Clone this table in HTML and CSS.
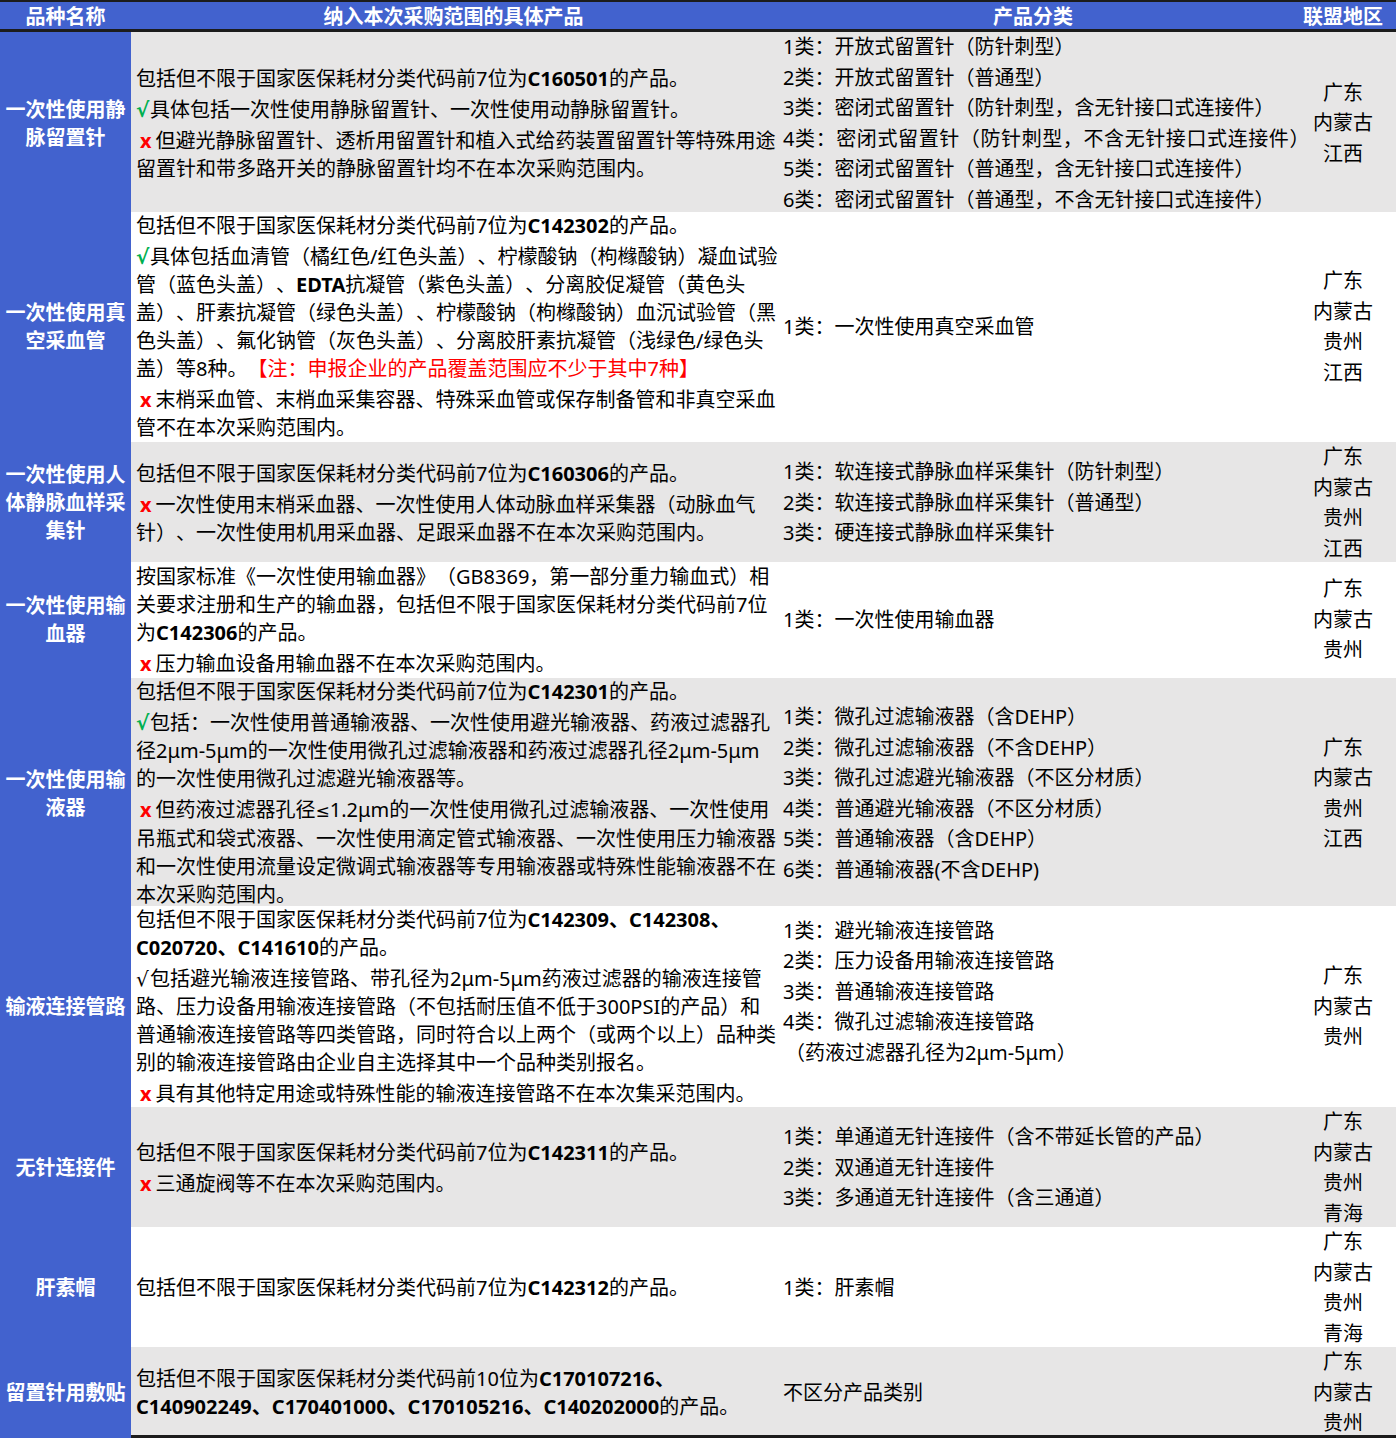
FILE: index.html
```html
<!DOCTYPE html>
<html lang="zh-CN">
<head>
<meta charset="utf-8">
<title>采购范围</title>
<link rel="stylesheet" href="styles.css">
</head>
<body>
<div class="table">
  <div class="head">
    <div class="h c1h">品种名称</div>
    <div class="h">纳入本次采购范围的具体产品</div>
    <div class="h">产品分类</div>
    <div class="h">联盟地区</div>
  </div>

  <div class="row gray r1">
    <div class="c1">一次性使用静脉留置针</div>
    <div class="c2">
      <div class="p">包括但不限于国家医保耗材分类代码前7位为<b>C160501</b>的产品。</div>
      <div class="p sp"><span class="yes">√</span>具体包括一次性使用静脉留置针、一次性使用动静脉留置针。</div>
      <div class="p sp"><span class="no">x</span>但避光静脉留置针、透析用留置针和植入式给药装置留置针等特殊用途<br>留置针和带多路开关的静脉留置针均不在本次采购范围内。</div>
    </div>
    <div class="c3">
      <div>1类：开放式留置针（防针刺型）</div>
      <div>2类：开放式留置针（普通型）</div>
      <div>3类：密闭式留置针（防针刺型，含无针接口式连接件）</div>
      <div class="wide">4类：密闭式留置针（防针刺型，不含无针接口式连接件）</div>
      <div>5类：密闭式留置针（普通型，含无针接口式连接件）</div>
      <div>6类：密闭式留置针（普通型，不含无针接口式连接件）</div>
    </div>
    <div class="c4"><div>广东</div><div>内蒙古</div><div>江西</div></div>
  </div>

  <div class="row r2">
    <div class="c1">一次性使用真空采血管</div>
    <div class="c2">
      <div class="p">包括但不限于国家医保耗材分类代码前7位为<b>C142302</b>的产品。</div>
      <div class="p sp"><span class="yes">√</span>具体包括血清管（橘红色/红色头盖）、柠檬酸钠（枸橼酸钠）凝血试验<br>管（蓝色头盖）、<b>EDTA</b>抗凝管（紫色头盖）、分离胶促凝管（黄色头<br>盖）、肝素抗凝管（绿色头盖）、柠檬酸钠（枸橼酸钠）血沉试验管（黑<br>色头盖）、氟化钠管（灰色头盖）、分离胶肝素抗凝管（浅绿色/绿色头<br>盖）等8种。<span class="note">【注：申报企业的产品覆盖范围应不少于其中7种】</span></div>
      <div class="p sp"><span class="no">x</span>末梢采血管、末梢血采集容器、特殊采血管或保存制备管和非真空采血<br>管不在本次采购范围内。</div>
    </div>
    <div class="c3"><div>1类：一次性使用真空采血管</div></div>
    <div class="c4"><div>广东</div><div>内蒙古</div><div>贵州</div><div>江西</div></div>
  </div>

  <div class="row gray r3">
    <div class="c1">一次性使用人体静脉血样采集针</div>
    <div class="c2">
      <div class="p">包括但不限于国家医保耗材分类代码前7位为<b>C160306</b>的产品。</div>
      <div class="p sp"><span class="no">x</span>一次性使用末梢采血器、一次性使用人体动脉血样采集器（动脉血气<br>针）、一次性使用机用采血器、足跟采血器不在本次采购范围内。</div>
    </div>
    <div class="c3">
      <div>1类：软连接式静脉血样采集针（防针刺型）</div>
      <div>2类：软连接式静脉血样采集针（普通型）</div>
      <div>3类：硬连接式静脉血样采集针</div>
    </div>
    <div class="c4"><div>广东</div><div>内蒙古</div><div>贵州</div><div>江西</div></div>
  </div>

  <div class="row r4">
    <div class="c1">一次性使用输血器</div>
    <div class="c2">
      <div class="p">按国家标准《一次性使用输血器》（GB8369，第一部分重力输血式）相<br>关要求注册和生产的输血器，包括但不限于国家医保耗材分类代码前7位<br>为<b>C142306</b>的产品。</div>
      <div class="p sp"><span class="no">x</span>压力输血设备用输血器不在本次采购范围内。</div>
    </div>
    <div class="c3"><div>1类：一次性使用输血器</div></div>
    <div class="c4"><div>广东</div><div>内蒙古</div><div>贵州</div></div>
  </div>

  <div class="row gray r5">
    <div class="c1">一次性使用输液器</div>
    <div class="c2">
      <div class="p">包括但不限于国家医保耗材分类代码前7位为<b>C142301</b>的产品。</div>
      <div class="p sp"><span class="yes">√</span>包括：一次性使用普通输液器、一次性使用避光输液器、药液过滤器孔<br>径2μm-5μm的一次性使用微孔过滤输液器和药液过滤器孔径2μm-5μm<br>的一次性使用微孔过滤避光输液器等。</div>
      <div class="p sp"><span class="no">x</span>但药液过滤器孔径<span class="sym">≤</span>1.2μm的一次性使用微孔过滤输液器、一次性使用<br>吊瓶式和袋式液器、一次性使用滴定管式输液器、一次性使用压力输液器<br>和一次性使用流量设定微调式输液器等专用输液器或特殊性能输液器不在<br>本次采购范围内。</div>
    </div>
    <div class="c3">
      <div>1类：微孔过滤输液器（含DEHP）</div>
      <div>2类：微孔过滤输液器（不含DEHP）</div>
      <div>3类：微孔过滤避光输液器（不区分材质）</div>
      <div>4类：普通避光输液器（不区分材质）</div>
      <div>5类：普通输液器（含DEHP）</div>
      <div>6类：普通输液器(不含DEHP)</div>
    </div>
    <div class="c4"><div>广东</div><div>内蒙古</div><div>贵州</div><div>江西</div></div>
  </div>

  <div class="row r6">
    <div class="c1">输液连接管路</div>
    <div class="c2">
      <div class="p">包括但不限于国家医保耗材分类代码前7位为<b>C142309、C142308、<br>C020720、C141610</b>的产品。</div>
      <div class="p sp"><span class="check">√</span>包括避光输液连接管路、带孔径为2μm-5μm药液过滤器的输液连接管<br>路、压力设备用输液连接管路（不包括耐压值不低于300PSI的产品）和<br>普通输液连接管路等四类管路，同时符合以上两个（或两个以上）品种类<br>别的输液连接管路由企业自主选择其中一个品种类别报名。</div>
      <div class="p sp"><span class="no">x</span>具有其他特定用途或特殊性能的输液连接管路不在本次集采范围内。</div>
    </div>
    <div class="c3">
      <div>1类：避光输液连接管路</div>
      <div>2类：压力设备用输液连接管路</div>
      <div>3类：普通输液连接管路</div>
      <div>4类：微孔过滤输液连接管路</div>
      <div class="indent">（药液过滤器孔径为2μm-5μm）</div>
      <div class="blank">&nbsp;</div>
    </div>
    <div class="c4"><div>广东</div><div>内蒙古</div><div>贵州</div></div>
  </div>

  <div class="row gray r7">
    <div class="c1">无针连接件</div>
    <div class="c2">
      <div class="p">包括但不限于国家医保耗材分类代码前7位为<b>C142311</b>的产品。</div>
      <div class="p sp"><span class="no">x</span>三通旋阀等不在本次采购范围内。</div>
    </div>
    <div class="c3">
      <div>1类：单通道无针连接件（含不带延长管的产品）</div>
      <div>2类：双通道无针连接件</div>
      <div>3类：多通道无针连接件（含三通道）</div>
    </div>
    <div class="c4"><div>广东</div><div>内蒙古</div><div>贵州</div><div>青海</div></div>
  </div>

  <div class="row r8">
    <div class="c1">肝素帽</div>
    <div class="c2">
      <div class="p">包括但不限于国家医保耗材分类代码前7位为<b>C142312</b>的产品。</div>
    </div>
    <div class="c3"><div>1类：肝素帽</div></div>
    <div class="c4"><div>广东</div><div>内蒙古</div><div>贵州</div><div>青海</div></div>
  </div>

  <div class="row gray r9">
    <div class="c1">留置针用敷贴</div>
    <div class="c2">
      <div class="p">包括但不限于国家医保耗材分类代码前10位为<b>C170107216、<br>C140902249、C170401000、C170105216、C140202000</b>的产品。</div>
    </div>
    <div class="c3"><div>不区分产品类别</div></div>
    <div class="c4"><div>广东</div><div>内蒙古</div><div>贵州</div></div>
  </div>
</div>
</body>
</html>
```

FILE: styles.css
```css
html, body {
  margin: 0;
  padding: 0;
  background: #ffffff;
}

body {
  font-family: "Noto Sans", "Noto Sans CJK SC", sans-serif;
  font-size: 20px;
  color: #000000;
  text-spacing-trim: space-all;
}

.table {
  width: 1396px;
  border-bottom: 3px solid #1c1c1c;
}

.head,
.row {
  display: grid;
  grid-template-columns: 131px 645px 514px 106px;
}

.head {
  height: 27px;
  background: #4262ce;
  border-top: 2px solid #1c1c1c;
  border-bottom: 3px solid #1c1c1c;
}

.h {
  color: #ffffff;
  font-weight: 700;
  text-align: center;
  line-height: 30px;
  white-space: nowrap;
}

.row {
  background: #ffffff;
}

.row.gray {
  background: #e7e6e6;
}

.r1 { height: 180px; }
.r2 { height: 230px; }
.r3 { height: 120px; }
.r4 { height: 116px; }
.r5 { height: 228px; }
.r6 { height: 201px; }
.r7 { height: 120px; }
.r8 { height: 120px; }
.r9 { height: 88px; }

.c1 {
  background: #4262ce;
  color: #ffffff;
  font-weight: 700;
  line-height: 28px;
  text-align: center;
  display: flex;
  align-items: center;
  justify-content: center;
  padding: 0 2px;
}

.c2 {
  display: flex;
  flex-direction: column;
  justify-content: center;
  padding-left: 5px;
  line-height: 28px;
  white-space: nowrap;
}

.c2 .sp {
  margin-top: 3px;
}

.c2 b {
  font-weight: 700;
}

.yes,
.check {
  font-family: "DejaVu Sans", sans-serif;
  font-size: 20px;
  font-weight: 700;
  display: inline-block;
  width: 14px;
}

.yes {
  color: #00b050;
}

.check {
  color: #000000;
  font-weight: 400;
}

.no {
  color: #ff0000;
  font-weight: 700;
  margin-left: 4px;
  margin-right: 4px;
}

.sym {
  font-family: "DejaVu Sans", sans-serif;
  font-size: 17px;
}

.note {
  color: #ff0000;
}

.c3 {
  display: flex;
  flex-direction: column;
  justify-content: center;
  padding-left: 7px;
  line-height: 30.5px;
  white-space: nowrap;
}

.c3 .wide {
  letter-spacing: 0.6px;
}

.c3 .indent {
  padding-left: 2px;
}

.c4 {
  display: flex;
  flex-direction: column;
  justify-content: center;
  align-items: center;
  line-height: 30.5px;
  white-space: nowrap;
}
```
